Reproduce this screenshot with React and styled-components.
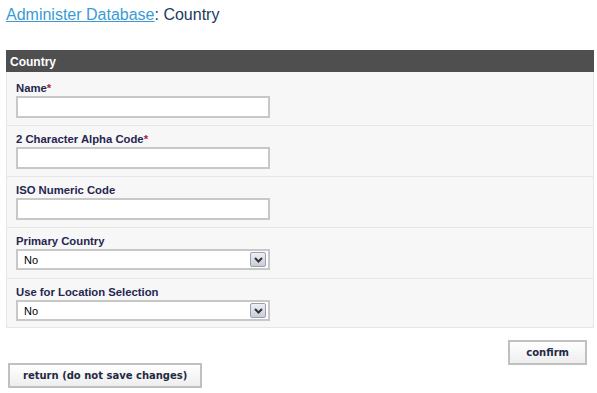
import React from 'react'
import styled, { createGlobalStyle } from 'styled-components'

const Global = createGlobalStyle`
  body {
    margin: 0;
    background: #ffffff;
    font-family: "Liberation Sans", Arial, sans-serif;
  }
`

const Page = styled.div`
  padding: 5px 5px 0 6px;
`

const Title = styled.h1`
  margin: 0;
  font-size: 16px;
  font-weight: normal;
  line-height: 20px;
  color: #1b3a5e;
`

const TitleLink = styled.a`
  color: #3a9bd5;
  text-decoration: underline;
`

const Panel = styled.section`
  margin-top: 25px;
  width: 586px;
  border: 1px solid #e6e6e6;
  border-top: none;
  background: #f7f7f7;
`

const PanelHeader = styled.div`
  height: 22px;
  margin: 0 -1px;
  padding: 0 4px;
  background: #4f4f4f;
  color: #ffffff;
  font-size: 12px;
  font-weight: bold;
  line-height: 24px;
`

const Row = styled.div`
  display: flex;
  flex-direction: column;
  gap: 1px;
  padding: ${p => (p.first ? '9px' : '6px')} 9px ${p => (p.last ? '5px' : '7px')};
  border-top: ${p => (p.first ? 'none' : '1px solid #e6e6e6')};
`

const Label = styled.label`
  font-size: 11.3px;
  font-weight: bold;
  line-height: 14px;
  color: #262650;
`

const Req = styled.span`
  color: #a0283c;
`

const TextBox = styled.input`
  box-sizing: border-box;
  width: 254px;
  height: 22px;
  margin: 0;
  border: 2px solid #c8c8c8;
  background: #ffffff;
  outline: none;
`

const SelectBox = styled.div`
  box-sizing: border-box;
  display: flex;
  align-items: center;
  justify-content: space-between;
  width: 254px;
  height: 21px;
  margin-bottom: 1px;
  padding: 0 2px 0 6px;
  border: 2px solid #c8c8c8;
  background: #ffffff;
  font-size: 11px;
  color: #000000;
`

const Arrow = styled.span`
  box-sizing: border-box;
  display: flex;
  align-items: center;
  justify-content: center;
  width: 16px;
  height: 15px;
  border: 1px solid #9aa0ad;
  border-radius: 2px;
  background: linear-gradient(#eef0f6, #c9ccd8);
`

const Actions = styled.div`
  display: flex;
  justify-content: flex-end;
  width: 581px;
  margin-top: 12px;
`

const Button = styled.button`
  box-sizing: border-box;
  height: 25px;
  padding: 0 ${p => p.pad}px;
  border: 2px solid #c0c0c0;
  background: linear-gradient(#ffffff, #eeeeee);
  font-family: "DejaVu Sans", Verdana, sans-serif;
  font-size: 10px;
  font-weight: bold;
  color: #1f2a44;
  cursor: pointer;
`

const Back = styled.div`
  margin-top: -2px;
  padding-left: 2px;
`

function Select({ value }) {
  return (
    <SelectBox>
      {value}
      <Arrow>
        <svg width="9" height="6" viewBox="0 0 9 6">
          <path d="M1 1 L4.5 4.5 L8 1" fill="none" stroke="#333" strokeWidth="2" />
        </svg>
      </Arrow>
    </SelectBox>
  )
}

export default function App() {
  return (
    <Page>
      <Global />
      <Title>
        <TitleLink href="#">Administer Database</TitleLink>: Country
      </Title>
      <Panel>
        <PanelHeader>Country</PanelHeader>
        <Row first>
          <Label>Name<Req>*</Req></Label>
          <TextBox />
        </Row>
        <Row>
          <Label>2 Character Alpha Code<Req>*</Req></Label>
          <TextBox />
        </Row>
        <Row>
          <Label>ISO Numeric Code</Label>
          <TextBox />
        </Row>
        <Row>
          <Label>Primary Country</Label>
          <Select value="No" />
        </Row>
        <Row last>
          <Label>Use for Location Selection</Label>
          <Select value="No" />
        </Row>
      </Panel>
      <Actions>
        <Button pad={16}>confirm</Button>
      </Actions>
      <Back>
        <Button pad={13}>return (do not save changes)</Button>
      </Back>
    </Page>
  )
}
